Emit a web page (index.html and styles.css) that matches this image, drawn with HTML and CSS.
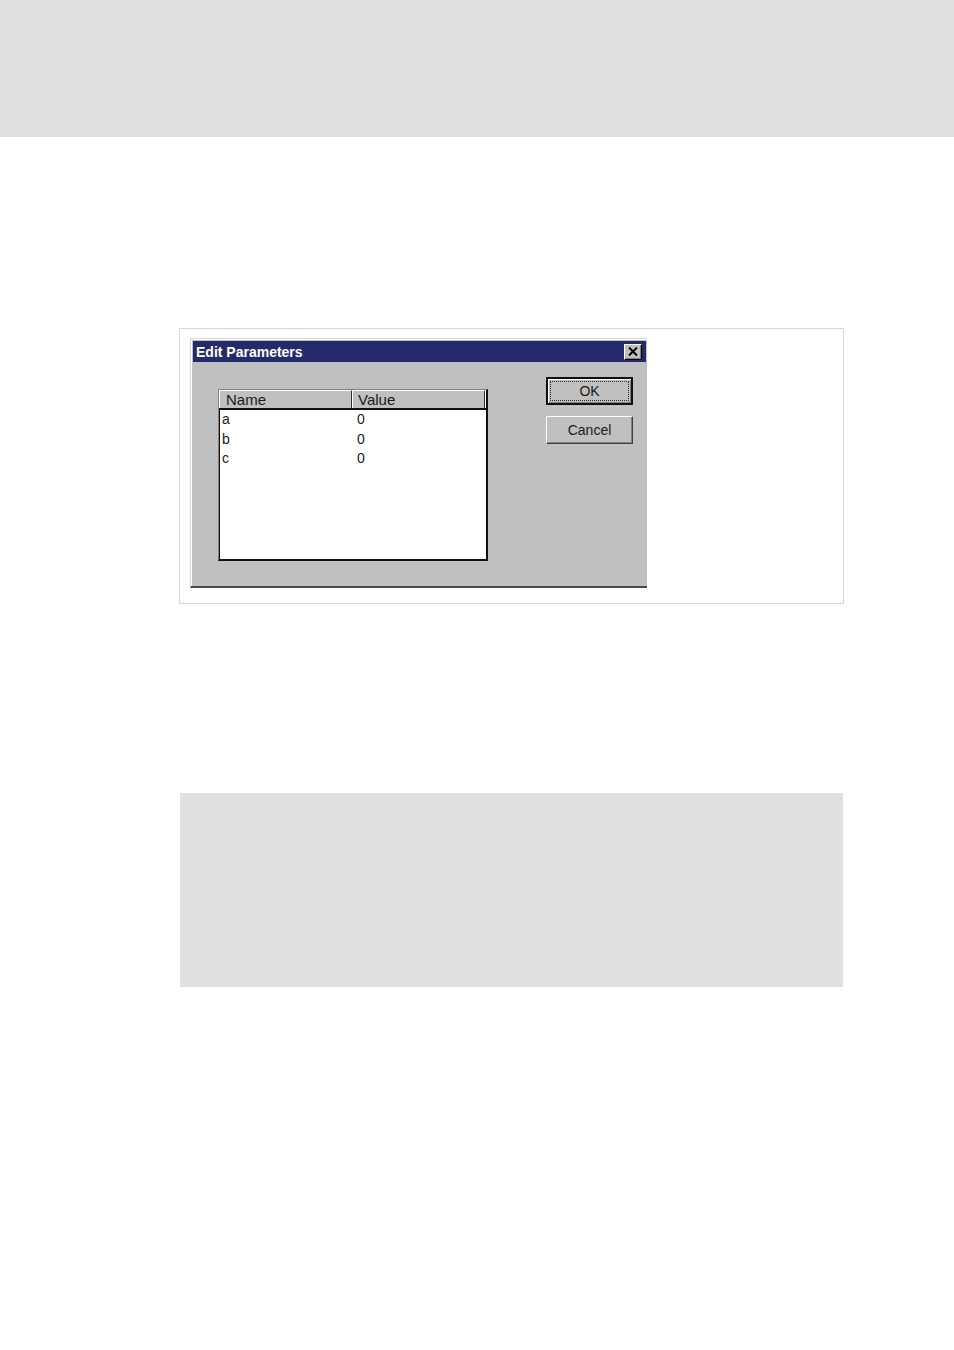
FILE: index.html
```html
<!DOCTYPE html>
<html>
<head>
<meta charset="utf-8">
<link rel="stylesheet" href="styles.css">
</head>
<body>
<div class="top-band"></div>
<div class="frame">
  <div class="dialog">
    <div class="titlebar">
      <span class="title">Edit Parameters</span>
      <span class="close-btn">
        <svg width="10" height="9" viewBox="0 0 10 9"><path d="M1 0.5 L9 8.5 M9 0.5 L1 8.5" stroke="#000" stroke-width="2" fill="none"/></svg>
      </span>
    </div>
    <div class="dlg-body">
      <div class="listview">
        <div class="lv-header">
          <div class="lv-col lv-col1">Name</div>
          <div class="lv-col lv-col2">Value</div>
          <div class="lv-rest"></div>
        </div>
        <div class="lv-rows">
          <div class="lv-row"><span class="cell c1">a</span><span class="cell c2">0</span></div>
          <div class="lv-row"><span class="cell c1">b</span><span class="cell c2">0</span></div>
          <div class="lv-row"><span class="cell c1">c</span><span class="cell c2">0</span></div>
        </div>
      </div>
      <div class="buttons">
        <div class="btn btn-default"><span class="focus">OK</span></div>
        <div class="btn">Cancel</div>
      </div>
    </div>
  </div>
</div>
<div class="note-box"></div>
</body>
</html>
```
FILE: styles.css
```css
html, body {
  margin: 0;
  padding: 0;
  background: #ffffff;
}
body {
  font-family: "Liberation Sans", Arial, sans-serif;
  width: 954px;
  height: 1350px;
  overflow: hidden;
}
.top-band {
  height: 137px;
  background: #e0e0e0;
}
.frame {
  box-sizing: border-box;
  margin: 191px 0 0 179px;
  width: 665px;
  height: 276px;
  border: 1px solid #d6d6d6;
  padding: 9px 0 0 10px;
}
.dialog {
  box-sizing: border-box;
  width: 457px;
  height: 250px;
  background: #c0c0c0;
  border-top: 1px solid #d8d8d8;
  border-left: 1px solid #d8d8d8;
  border-bottom: 2px solid #4a4a4a;
  box-shadow: inset 1px 1px 0 #ffffff;
  padding: 2px 1px 0 2px;
  display: flex;
  flex-direction: column;
}
.titlebar {
  height: 21px;
  background: #242a6c;
  display: flex;
  align-items: center;
  justify-content: space-between;
  padding: 0 4px 0 3px;
}
.title {
  color: #ffffff;
  font-weight: bold;
  font-size: 14px;
  letter-spacing: 0;
}
.close-btn {
  box-sizing: border-box;
  width: 18px;
  height: 16px;
  background: #c0c0c0;
  border-top: 1px solid #ffffff;
  border-left: 1px solid #ffffff;
  border-right: 1px solid #000000;
  border-bottom: 1px solid #000000;
  box-shadow: inset -1px -1px 0 #808080;
  display: flex;
  align-items: center;
  justify-content: center;
}
.dlg-body {
  display: flex;
  align-items: flex-start;
  padding: 15px 0 0 25px;
}
.listview {
  box-sizing: border-box;
  width: 270px;
  height: 172px;
  margin-top: 12px;
  border-top: 1px solid #808080;
  border-left: 1px solid #808080;
  border-right: 2px solid #101010;
  border-bottom: 2px solid #101010;
  background: #ffffff;
  display: flex;
  flex-direction: column;
}
.lv-header {
  display: flex;
  height: 18px;
  background: #c0c0c0;
  border-bottom: 2px solid #101010;
  flex-shrink: 0;
}
.lv-col {
  box-sizing: border-box;
  width: 133px;
  height: 18px;
  border-top: 1px solid #ffffff;
  border-left: 1px solid #ffffff;
  border-right: 1px solid #303030;
  font-size: 15px;
  line-height: 18px;
  padding-left: 6px;
  color: #1a1a1a;
}
.lv-col2 {
  padding-left: 5px;
}
.lv-rest {
  flex: 1;
  border-top: 1px solid #ffffff;
  border-left: 1px solid #ffffff;
}
.lv-rows {
  flex: 1;
  border-left: 1px solid #101010;
  padding-top: 0;
}
.lv-row {
  display: flex;
  height: 19.5px;
  line-height: 19px;
  font-size: 14px;
  color: #1a1a1a;
}
.cell {
  box-sizing: border-box;
}
.cell.c1 {
  width: 134px;
  padding-left: 2px;
}
.cell.c2 {
  padding-left: 3px;
}
.buttons {
  display: flex;
  flex-direction: column;
  gap: 11px;
  margin-left: 58px;
}
.btn {
  box-sizing: border-box;
  width: 87px;
  height: 28px;
  background: #c0c0c0;
  border-top: 1px solid #ffffff;
  border-left: 1px solid #ffffff;
  border-right: 1px solid #404040;
  border-bottom: 1px solid #404040;
  box-shadow: inset -1px -1px 0 #808080;
  font-size: 14px;
  color: #1a1a1a;
  display: flex;
  align-items: center;
  justify-content: center;
}
.btn-default {
  border: 2px solid #101010;
  box-shadow: inset 1px 1px 0 #ffffff, inset -1px -1px 0 #808080;
  padding: 2px;
}
.focus {
  box-sizing: border-box;
  width: 100%;
  height: 100%;
  border: 1px dotted #303030;
  display: flex;
  align-items: center;
  justify-content: center;
}
.note-box {
  margin: 189px 0 0 180px;
  width: 663px;
  height: 194px;
  background: #e0e0e0;
}
```
